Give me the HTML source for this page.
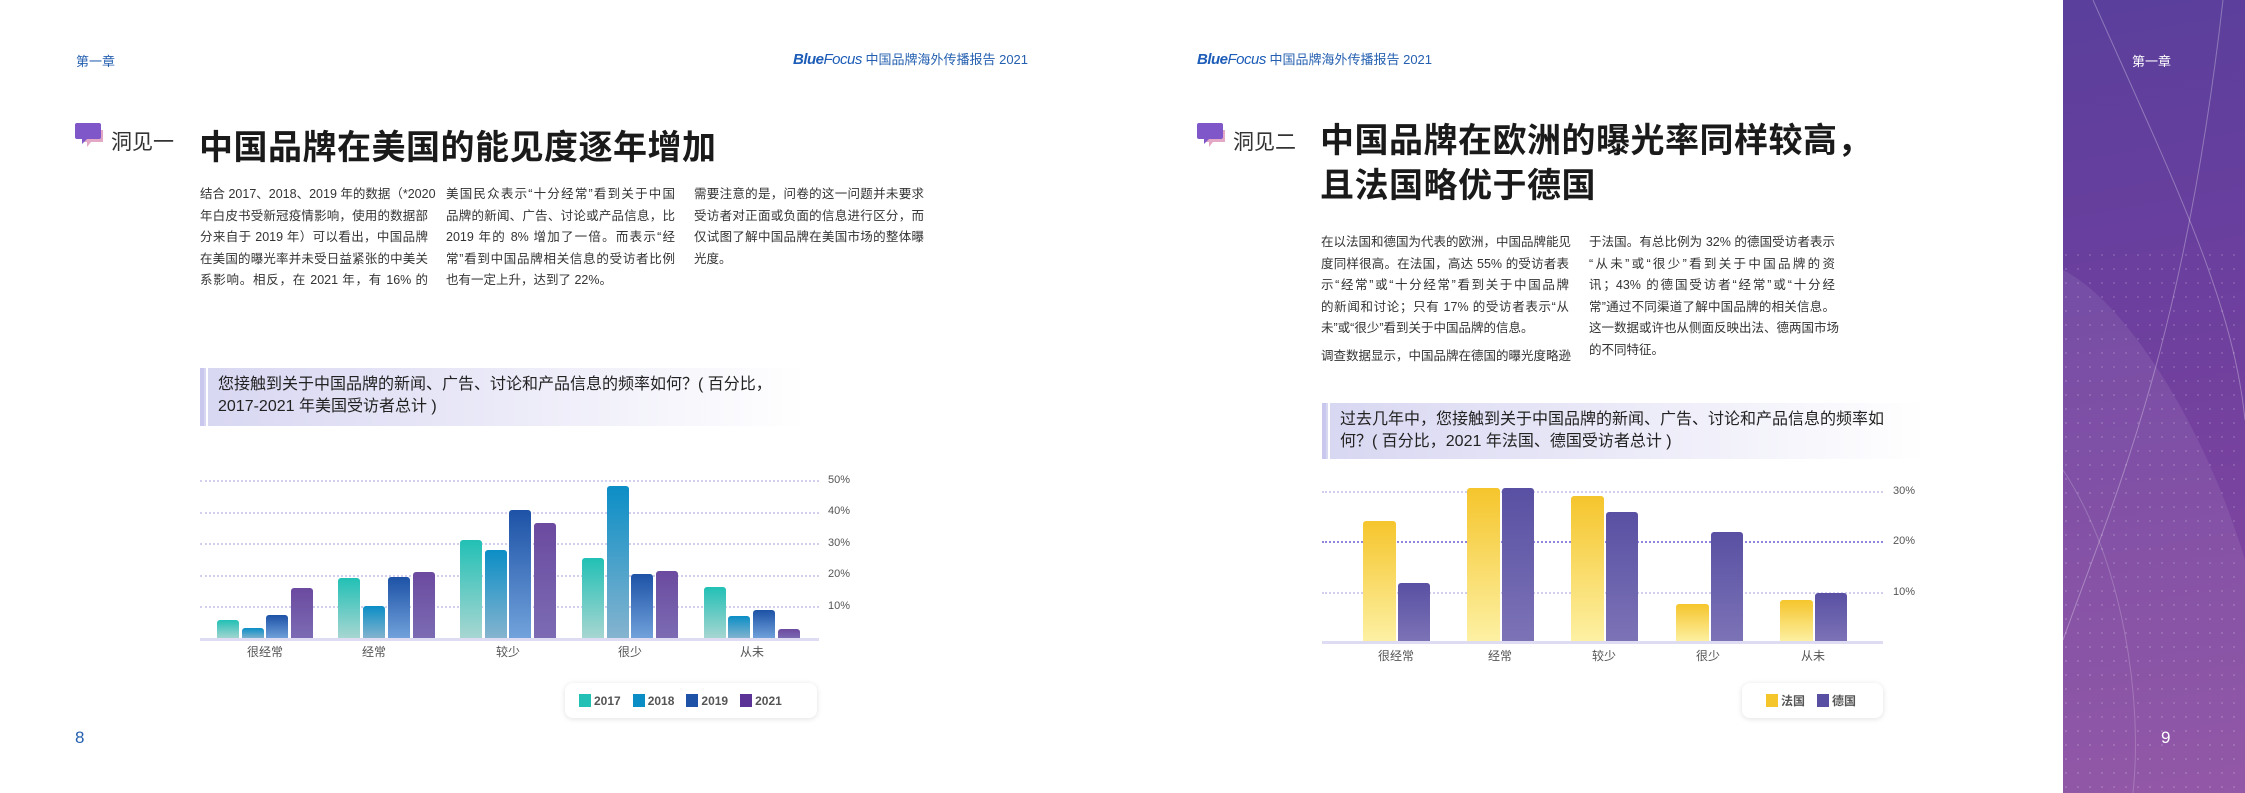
<!DOCTYPE html>
<html><head><meta charset="utf-8">
<style>
*{margin:0;padding:0;box-sizing:border-box}
body{width:2245px;height:793px;position:relative;background:#fff;font-family:"Liberation Sans","Noto Sans CJK SC",sans-serif;color:#333;overflow:hidden}
.a{position:absolute;white-space:nowrap}
.hdr{font-size:13px;color:#2560b0}
.bf{font-weight:bold;font-style:italic;color:#1d5db8;font-size:15px;letter-spacing:-0.5px}
.ttl{font-size:34px;font-weight:bold;color:#1a1a1a;letter-spacing:0.5px}
.dj{font-size:21px;color:#333}
.col div{height:21.5px;line-height:21.5px;font-size:12.5px;color:#333;text-align:justify;text-align-last:justify;white-space:nowrap}
.col div.l{text-align-last:left}
.q{background:linear-gradient(90deg,#d8d7f2,#ebeaf8 50%,#fff);border-left:4px solid #c9c7ee;font-size:16px;color:#222;padding-left:14px;line-height:22px}
.q:before{content:"";position:absolute;left:2px;top:0;bottom:0;width:2px;background:#fff}
.grid{position:absolute;height:0;border-top:2px dotted #d2cfee}
.bar{position:absolute;border-radius:3px 3px 0 0}
.lbl{position:absolute;font-size:12px;color:#555;transform:translateX(-50%)}
.ax{position:absolute;font-size:11px;color:#555}
.leg{position:absolute;background:#fff;border-radius:8px;box-shadow:0 1px 6px rgba(0,0,0,.12);font-size:12px;font-weight:bold;color:#555;display:flex;align-items:center}
.leg span{display:inline-block;width:12px;height:13px;margin-right:3px;vertical-align:-2px}
.c17{background:linear-gradient(#22c0b5,#a9d6d2)}
.c18{background:linear-gradient(#0b8ec6,#86b4cf)}
.c19{background:linear-gradient(#1d52a6,#72a3dc)}
.c21{background:linear-gradient(#6b4a9f,#7c6cb4)}
.fr{background:linear-gradient(#f5c52c,#fdf1a4)}
.de{background:linear-gradient(#5950a3,#7c73b7)}
</style></head><body>

<!-- LEFT PAGE -->
<div class="a hdr" style="left:76px;top:51px">第一章</div>
<div class="a hdr" style="left:793px;top:49px"><span class="bf">Blue</span><span class="bf" style="font-weight:normal">Focus</span> 中国品牌海外传播报告 2021</div>

<svg class="a" style="left:75px;top:122px" width="30" height="26" viewBox="0 0 30 26"><path d="M8 8h20v12H16l-4 5v-5H8z" fill="#e3a8c6"/><path d="M2 1h22a2 2 0 0 1 2 2v12a2 2 0 0 1-2 2H12l-5 5v-5H2a2 2 0 0 1-2-2V3a2 2 0 0 1 2-2z" fill="#7f57c8"/></svg>
<div class="a dj" style="left:111px;top:126px">洞见一</div>
<div class="a ttl" style="left:199px;top:120px">中国品牌在美国的能见度逐年增加</div>

<div class="a col" style="left:200px;top:184px;width:228px">
<div>结合 2017、2018、2019 年的数据（*2020</div>
<div>年白皮书受新冠疫情影响，使用的数据部</div>
<div>分来自于 2019 年）可以看出，中国品牌</div>
<div>在美国的曝光率并未受日益紧张的中美关</div>
<div>系影响。相反，在 2021 年，有 16% 的</div>
</div>
<div class="a col" style="left:446px;top:184px;width:229px">
<div>美国民众表示“十分经常”看到关于中国</div>
<div>品牌的新闻、广告、讨论或产品信息，比</div>
<div>2019 年的 8% 增加了一倍。而表示“经</div>
<div>常”看到中国品牌相关信息的受访者比例</div>
<div class="l">也有一定上升，达到了 22%。</div>
</div>
<div class="a col" style="left:694px;top:184px;width:230px">
<div>需要注意的是，问卷的这一问题并未要求</div>
<div>受访者对正面或负面的信息进行区分，而</div>
<div>仅试图了解中国品牌在美国市场的整体曝</div>
<div class="l">光度。</div>
</div>

<div class="a q" style="left:200px;top:368px;width:605px;height:58px;padding-top:6px">您接触到关于中国品牌的新闻、广告、讨论和产品信息的频率如何？( 百分比，<br>2017-2021 年美国受访者总计 )</div>

<div class="grid" style="left:200px;top:480px;width:619px"></div>
<div class="grid" style="left:200px;top:512px;width:619px"></div>
<div class="grid" style="left:200px;top:543px;width:619px"></div>
<div class="grid" style="left:200px;top:575px;width:619px"></div>
<div class="grid" style="left:200px;top:606px;width:619px"></div>
<div class="ax" style="left:828px;top:474px">50%</div>
<div class="ax" style="left:828px;top:505px">40%</div>
<div class="ax" style="left:828px;top:537px">30%</div>
<div class="ax" style="left:828px;top:568px">20%</div>
<div class="ax" style="left:828px;top:600px">10%</div>

<div class="bar c17" style="left:217px;top:620px;width:22px;height:19px"></div>
<div class="bar c18" style="left:242px;top:628px;width:22px;height:11px"></div>
<div class="bar c19" style="left:266px;top:615px;width:22px;height:24px"></div>
<div class="bar c21" style="left:291px;top:588px;width:22px;height:51px"></div>

<div class="bar c17" style="left:338px;top:578px;width:22px;height:61px"></div>
<div class="bar c18" style="left:363px;top:606px;width:22px;height:33px"></div>
<div class="bar c19" style="left:388px;top:577px;width:22px;height:62px"></div>
<div class="bar c21" style="left:413px;top:572px;width:22px;height:67px"></div>

<div class="bar c17" style="left:460px;top:540px;width:22px;height:99px"></div>
<div class="bar c18" style="left:485px;top:550px;width:22px;height:89px"></div>
<div class="bar c19" style="left:509px;top:510px;width:22px;height:129px"></div>
<div class="bar c21" style="left:534px;top:523px;width:22px;height:116px"></div>

<div class="bar c17" style="left:582px;top:558px;width:22px;height:81px"></div>
<div class="bar c18" style="left:607px;top:486px;width:22px;height:153px"></div>
<div class="bar c19" style="left:631px;top:574px;width:22px;height:65px"></div>
<div class="bar c21" style="left:656px;top:571px;width:22px;height:68px"></div>

<div class="bar c17" style="left:704px;top:587px;width:22px;height:52px"></div>
<div class="bar c18" style="left:728px;top:616px;width:22px;height:23px"></div>
<div class="bar c19" style="left:753px;top:610px;width:22px;height:29px"></div>
<div class="bar c21" style="left:778px;top:629px;width:22px;height:10px"></div>

<div class="a" style="left:200px;top:638px;width:619px;height:3px;background:#dedcf2"></div>
<div class="lbl" style="left:265px;top:643px">很经常</div>
<div class="lbl" style="left:374px;top:643px">经常</div>
<div class="lbl" style="left:508px;top:643px">较少</div>
<div class="lbl" style="left:630px;top:643px">很少</div>
<div class="lbl" style="left:752px;top:643px">从未</div>

<div class="leg" style="left:565px;top:683px;width:252px;height:35px;padding-left:14px;gap:12px">
<div><span style="background:#22c0b5"></span>2017</div>
<div><span style="background:#0b8ec6"></span>2018</div>
<div><span style="background:#1d52a6"></span>2019</div>
<div><span style="background:#5b3396"></span>2021</div>
</div>
<div class="a" style="left:75px;top:728px;font-size:17px;color:#2560b0">8</div>

<!-- RIGHT PAGE -->
<div class="a hdr" style="left:1197px;top:49px"><span class="bf">Blue</span><span class="bf" style="font-weight:normal">Focus</span> 中国品牌海外传播报告 2021</div>

<svg class="a" style="left:1197px;top:122px" width="30" height="26" viewBox="0 0 30 26"><path d="M8 8h20v12H16l-4 5v-5H8z" fill="#e3a8c6"/><path d="M2 1h22a2 2 0 0 1 2 2v12a2 2 0 0 1-2 2H12l-5 5v-5H2a2 2 0 0 1-2-2V3a2 2 0 0 1 2-2z" fill="#7f57c8"/></svg>
<div class="a dj" style="left:1233px;top:126px">洞见二</div>
<div class="a ttl" style="left:1320px;top:119px;line-height:45px;white-space:normal;width:600px">中国品牌在欧洲的曝光率同样较高，<br>且法国略优于德国</div>

<div class="a col" style="left:1321px;top:232px;width:248px">
<div>在以法国和德国为代表的欧洲，中国品牌能见</div>
<div>度同样很高。在法国，高达 55% 的受访者表</div>
<div>示“经常”或“十分经常”看到关于中国品牌</div>
<div>的新闻和讨论；只有 17% 的受访者表示“从</div>
<div class="l">未”或“很少”看到关于中国品牌的信息。</div>
<div class="l" style="margin-top:6px">调查数据显示，中国品牌在德国的曝光度略逊</div>
</div>
<div class="a col" style="left:1589px;top:232px;width:246px">
<div>于法国。有总比例为 32% 的德国受访者表示</div>
<div>“从未”或“很少”看到关于中国品牌的资</div>
<div>讯；43% 的德国受访者“经常”或“十分经</div>
<div>常”通过不同渠道了解中国品牌的相关信息。</div>
<div>这一数据或许也从侧面反映出法、德两国市场</div>
<div class="l">的不同特征。</div>
</div>

<div class="a q" style="left:1322px;top:403px;width:603px;height:56px;padding-top:6px">过去几年中，您接触到关于中国品牌的新闻、广告、讨论和产品信息的频率如<br>何？( 百分比，2021 年法国、德国受访者总计 )</div>

<div class="grid" style="left:1322px;top:491px;width:561px"></div>
<div class="grid" style="left:1322px;top:541px;width:561px;border-top-color:#8d88de"></div>
<div class="grid" style="left:1322px;top:592px;width:561px"></div>
<div class="ax" style="left:1893px;top:485px">30%</div>
<div class="ax" style="left:1893px;top:535px">20%</div>
<div class="ax" style="left:1893px;top:586px">10%</div>

<div class="bar fr" style="left:1363px;top:521px;width:33px;height:121px"></div>
<div class="bar de" style="left:1398px;top:583px;width:32px;height:59px"></div>
<div class="bar fr" style="left:1467px;top:488px;width:33px;height:154px"></div>
<div class="bar de" style="left:1502px;top:488px;width:32px;height:154px"></div>
<div class="bar fr" style="left:1571px;top:496px;width:33px;height:146px"></div>
<div class="bar de" style="left:1606px;top:512px;width:32px;height:130px"></div>
<div class="bar fr" style="left:1676px;top:604px;width:33px;height:38px"></div>
<div class="bar de" style="left:1711px;top:532px;width:32px;height:110px"></div>
<div class="bar fr" style="left:1780px;top:600px;width:33px;height:42px"></div>
<div class="bar de" style="left:1815px;top:593px;width:32px;height:49px"></div>

<div class="a" style="left:1322px;top:641px;width:561px;height:3px;background:#dedcf2"></div>
<div class="lbl" style="left:1396px;top:647px">很经常</div>
<div class="lbl" style="left:1500px;top:647px">经常</div>
<div class="lbl" style="left:1604px;top:647px">较少</div>
<div class="lbl" style="left:1708px;top:647px">很少</div>
<div class="lbl" style="left:1813px;top:647px">从未</div>

<div class="leg" style="left:1742px;top:683px;width:141px;height:35px;padding-left:24px;gap:12px">
<div><span style="background:#f5c52c"></span>法国</div>
<div><span style="background:#5950a3"></span>德国</div>
</div>

<!-- purple panel -->
<div class="a" style="left:2063px;top:0;width:182px;height:793px;background:linear-gradient(170deg,#5a3f9c 0%,#6d3f9e 40%,#8a4aa0 100%);overflow:hidden">
<svg width="182" height="793" style="position:absolute;left:0;top:0">
<defs><pattern id="d" width="12" height="14" patternUnits="userSpaceOnUse"><circle cx="3" cy="3" r="1" fill="rgba(255,255,255,.18)"/></pattern></defs>
<rect x="0" y="250" width="182" height="543" fill="url(#d)"/>
<path d="M0 270 C60 300 140 420 182 560 L182 793 L0 793Z" fill="rgba(255,255,255,.08)"/>
<path d="M30 0 C110 180 170 300 182 420" stroke="rgba(255,255,255,.3)" fill="none"/>
<path d="M0 640 C50 500 120 350 160 0" stroke="rgba(255,255,255,.3)" fill="none"/>
<path d="M0 470 C60 560 80 700 70 793" stroke="rgba(255,255,255,.2)" fill="none"/>
</svg>
<div class="a" style="left:69px;top:51px;font-size:13px;color:#fff">第一章</div>
<div class="a" style="left:98px;top:728px;font-size:17px;color:#fff">9</div>
</div>
</body></html>
